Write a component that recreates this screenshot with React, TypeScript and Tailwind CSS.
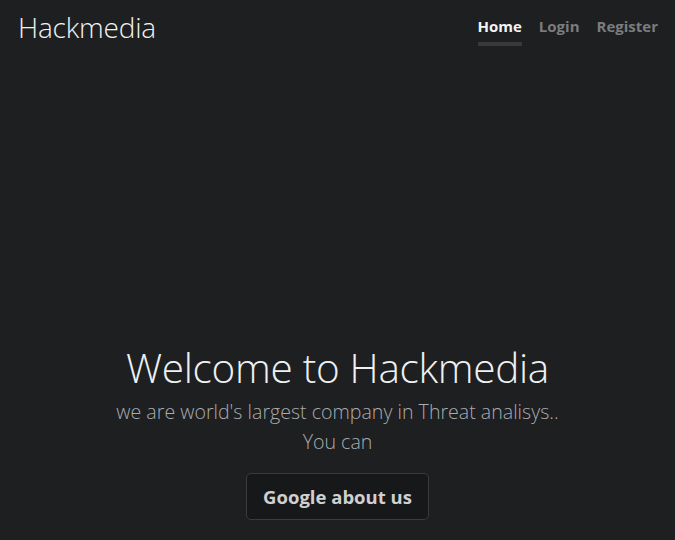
import React from 'react';

const font = { fontFamily: '"Open Sans", "Noto Sans", sans-serif' };

export default function App() {
  return (
    <div style={font} className="h-[540px] w-full bg-[#1e1f21] text-[#eceded] flex flex-col overflow-hidden">
      <header className="flex items-start justify-between pl-[18px] pr-[17px] pt-[10px]">
        <h3 className="text-[28px] font-light leading-[34px] tracking-[-0.2px] text-[#f1f1f1]">Hackmedia</h3>
        <nav className="flex gap-[17px] pt-[6px] text-[15px] font-bold">
          <a href="#" className="text-[#f4f4f4] border-b-[4px] border-[#39393b] pb-[6px] leading-[20px]">Home</a>
          <a href="#" className="text-[#7b7c7e] leading-[20px]">Login</a>
          <a href="#" className="text-[#7b7c7e] leading-[20px]">Register</a>
        </nav>
      </header>

      <main className="flex-1 flex flex-col items-center justify-end text-center pb-[20px]">
        <h1 className="text-[40.5px] font-light leading-[48px] text-[#eef0f2] tracking-[-0.3px]">Welcome to Hackmedia</h1>
        <p className="mt-[5px] text-[19.6px] font-light leading-[30px] text-[#a9abaf] max-w-[470px]">
          we are world's largest company in Threat analisys.. You can
        </p>
        <a
          href="#"
          className="mt-[16px] px-[16px] h-[47px] flex items-center rounded-[5px] border border-[#3a3b3d] bg-[#17181a] text-[18.5px] font-bold text-[#cfd0d2]"
        >
          Google about us
        </a>
      </main>
    </div>
  );
}
